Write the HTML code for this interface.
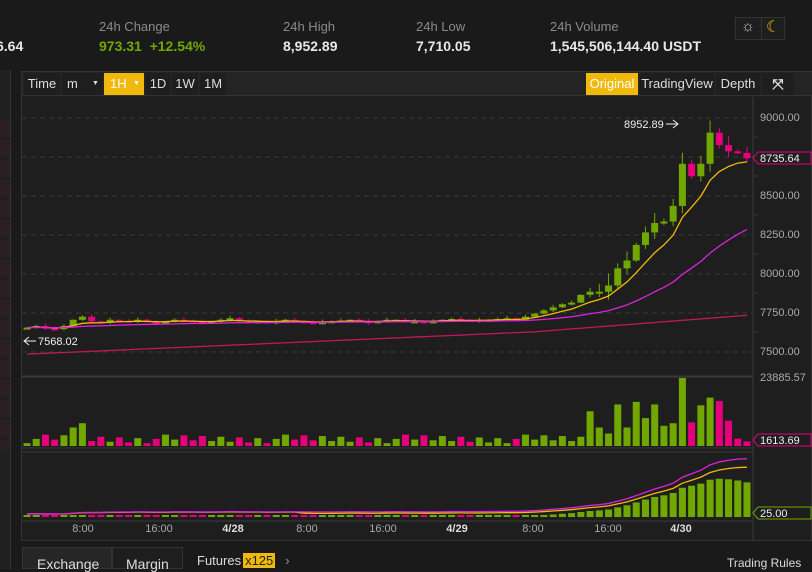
<!DOCTYPE html>
<html><head><meta charset="utf-8">
<style>
*{margin:0;padding:0;box-sizing:border-box}
body{width:812px;height:569px;background:#1a1a1a;font-family:"Liberation Sans",sans-serif;overflow:hidden;position:relative;color:#ddd}
.lbl{position:absolute;top:19px;font-size:13px;color:#8a8a8a}
.val{position:absolute;top:38px;font-size:14px;font-weight:bold;color:#e8e8e8}
.tb{position:absolute;top:73px;height:22px;font-size:13px;line-height:22px;color:#ddd;background:#1e1e1e;text-align:center;white-space:nowrap}
.y{font-size:11px;fill:#aaa}
</style></head><body>
<div class="val" style="left:-4px">6.64</div>
<div class="lbl" style="left:99px">24h Change</div>
<div class="val" style="left:99px;color:#70a800">973.31&nbsp; +12.54%</div>
<div class="lbl" style="left:283px">24h High</div>
<div class="val" style="left:283px">8,952.89</div>
<div class="lbl" style="left:416px">24h Low</div>
<div class="val" style="left:416px">7,710.05</div>
<div class="lbl" style="left:550px">24h Volume</div>
<div class="val" style="left:550px">1,545,506,144.40 USDT</div>
<div style="position:absolute;left:735px;top:17px;width:50px;height:23px;border:1px solid #333;background:#1e1e1e"></div>
<div style="position:absolute;left:741px;top:18px;font-size:15px;color:#ccc">☼</div>
<div style="position:absolute;left:761px;top:17px;width:1px;height:23px;background:#333"></div>
<div style="position:absolute;left:766px;top:17px;font-size:16px;color:#f0b90b">☾</div>

<div style="position:absolute;left:0;top:70px;width:11px;height:499px;background:#202020;border-right:1px solid #333"></div>
<div style="position:absolute;left:0;top:120px;width:10px;height:330px;background:repeating-linear-gradient(#2b1e24 0 17px,#1e1e1e 17px 20px)"></div>

<div style="position:absolute;left:21px;top:71px;width:791px;height:470px;background:#1e1e1e;border:1px solid #333"></div>
<div style="position:absolute;left:22px;top:72px;width:790px;height:24px;background:#242424;border-bottom:1px solid #333"></div>
<div class="tb" style="left:24px;width:36px">Time</div>
<div class="tb" style="left:62px;width:40px;text-align:left;padding-left:5px">m<span style="font-size:7px;position:absolute;left:30px">▼</span></div>
<div class="tb" style="left:104px;width:40px;background:#f0b90b;color:#fff;text-align:left;padding-left:6px">1H<span style="font-size:7px;position:absolute;left:29px">▼</span></div>
<div class="tb" style="left:146px;width:24px">1D</div>
<div class="tb" style="left:172px;width:26px">1W</div>
<div class="tb" style="left:200px;width:26px">1M</div>
<div class="tb" style="left:586px;width:52px;background:#f0b90b;color:#fff">Original</div>
<div class="tb" style="left:640px;width:74px">TradingView</div>
<div class="tb" style="left:716px;width:44px">Depth</div>
<div class="tb" style="left:762px;width:32px;font-size:14px;font-weight:bold">⤧</div>

<svg style="position:absolute;left:0;top:0" width="812" height="569">
<g stroke="#3a3a3a" stroke-dasharray="5,4">
<line x1="22" x2="753" y1="118" y2="118"/><line x1="22" x2="753" y1="157" y2="157"/><line x1="22" x2="753" y1="196" y2="196"/><line x1="22" x2="753" y1="235" y2="235"/><line x1="22" x2="753" y1="274" y2="274"/><line x1="22" x2="753" y1="313" y2="313"/><line x1="22" x2="753" y1="352" y2="352"/>
</g>
<g stroke="#3a3a3a"><line x1="753" x2="753" y1="97" y2="540"/><line x1="22" x2="753" y1="376" y2="376"/><line x1="22" x2="753" y1="377" y2="377"/><line x1="22" x2="753" y1="448" y2="448"/><line x1="22" x2="753" y1="452" y2="452"/><line x1="22" x2="753" y1="521" y2="521"/>
<line x1="753" x2="758" y1="137" y2="137"/><line x1="753" x2="758" y1="176" y2="176"/><line x1="753" x2="758" y1="215" y2="215"/><line x1="753" x2="758" y1="254" y2="254"/><line x1="753" x2="758" y1="293" y2="293"/><line x1="753" x2="758" y1="332" y2="332"/></g>
<g><text x="760" y="121" class="y">9000.00</text><text x="760" y="199" class="y">8500.00</text><text x="760" y="238" class="y">8250.00</text><text x="760" y="277" class="y">8000.00</text><text x="760" y="316" class="y">7750.00</text><text x="760" y="355" class="y">7500.00</text><text x="760" y="381" class="y">23885.57</text></g>
<g id="cd"></g>
<path d="M753 158 l5 -6 h53 v12 h-53z" fill="#1e1e1e" stroke="#e6007a"/><text x="760" y="162" font-size="11" fill="#eee">8735.64</text>
<path d="M753 440 l5 -6 h53 v12 h-53z" fill="#1e1e1e" stroke="#e6007a"/><text x="760" y="444" font-size="11" fill="#eee">1613.69</text>
<path d="M753 513 l5 -6 h53 v12 h-53z" fill="#1e1e1e" stroke="#70a800"/><text x="760" y="517" font-size="11" fill="#eee">25.00</text>
<text x="624" y="128" font-size="11" fill="#eee">8952.89</text><path d="M666 124 h12 m-5 -4 l5 4 l-5 4" stroke="#eee" fill="none"/>
<path d="M36 341 h-12 m5 -4 l-5 4 l5 4" stroke="#eee" fill="none"/><text x="38" y="345" font-size="11" fill="#eee">7568.02</text>
<g font-size="11" fill="#aaa" text-anchor="middle"><text x="83" y="532">8:00</text><text x="159" y="532">16:00</text><text x="233" y="532" fill="#ddd" font-weight="bold">4/28</text><text x="307" y="532">8:00</text><text x="383" y="532">16:00</text><text x="457" y="532" fill="#ddd" font-weight="bold">4/29</text><text x="533" y="532">8:00</text><text x="608" y="532">16:00</text><text x="681" y="532" fill="#ddd" font-weight="bold">4/30</text></g>
</svg>

<div style="position:absolute;left:22px;top:547px;width:90px;height:22px;background:#262626;border:1px solid #333;font-size:14px;padding:8px 0 0 14px">Exchange</div>
<div style="position:absolute;left:112px;top:547px;width:71px;height:22px;background:#1e1e1e;border:1px solid #333;font-size:14px;padding:8px 0 0 13px">Margin</div>
<div style="position:absolute;left:197px;top:553px;font-size:13px">Futures<span style="background:#f0b90b;color:#222;padding:0 2px;margin-left:2px">x125</span><span style="margin-left:10px;color:#999">›</span></div>
<div style="position:absolute;left:727px;top:556px;font-size:12px">Trading Rules</div>

<script>
var cl=[7650,7660,7645,7640,7660,7700,7720,7690,7680,7700,7695,7690,7700,7685,7680,7690,7700,7695,7690,7680,7690,7700,7710,7690,7685,7690,7680,7690,7700,7690,7685,7680,7685,7690,7695,7700,7690,7680,7690,7700,7700,7690,7690,7685,7690,7700,7705,7700,7690,7700,7700,7705,7710,7700,7720,7740,7760,7780,7800,7810,7860,7880,7880,7920,8030,8080,8180,8260,8320,8330,8430,8700,8620,8700,8900,8820,8780,8770,8735];
var n=cl.length,x0=27,st=(747-27)/(n-1),Y=p=>117+(9000-p)*0.156,h='';
function ema(k){var o=[],e=cl[0],a=2/(k+1);cl.forEach(c=>{e=e+a*(c-e);o.push(e)});return o}
var m1=ema(7),m2=ema(30),m3=ema(99);
for(var i=0;i<n;i++){var o=i?cl[i-1]:7640,c=cl[i],up=c>=o,col=up?'#70a800':'#e6007a',x=x0+i*st,t=Y(Math.max(o,c)),b=Y(Math.min(o,c)),hh=Math.max(b-t,2);
var w=i>60?4+((i*37)%11)*2:1+((i*37)%5);
h+=`<line x1="${x}" x2="${x}" y1="${t-w/2}" y2="${b+w/3}" stroke="${col}"/><rect x="${x-3.5}" y="${t}" width="7" height="${hh}" fill="${col}"/>`;
var v=i>60?(Math.abs(c-o)*60+2000+((i*53)%7)*1500):(1000+((i*71)%13)*250+(i==5||i==6?4500:0));v=Math.min(v,23885);if(i==n-1)v=1613;
var vh=v/23885*68;h+=`<rect x="${x-3.5}" y="${446-vh}" width="7" height="${vh}" fill="${col}"/>`;
var mh=Math.max(0,(m1[i]-m2[i])*0.08);if(i>56)h+=`<rect x="${x-3.5}" y="${517-mh}" width="7" height="${mh}" fill="#70a800"/>`;else h+=`<rect x="${x-3.5}" y="515" width="7" height="2" fill="${col}"/>`;}
function pl(a,f,col){return `<polyline fill="none" stroke="${col}" stroke-width="1.3" points="${a.map((v,i)=>(x0+i*st)+','+f(v,i)).join(' ')}"/>`}
h+=pl(m1,v=>Y(v),'#f0b90b')+pl(m2,v=>Y(v),'#e020e0')+pl(m3.map((v,i)=>7480+i*2.6+Math.max(0,i-55)*2),v=>Y(v),'#c2185b');
h+=pl(m1,(v,i)=>517-Math.max(0,(v-7650))*0.045-(i<30?3:2),'#f0b90b')+pl(m1,(v,i)=>515-Math.max(0,(v-7630))*0.052,'#e020e0');
document.getElementById('cd').innerHTML=h;
</script>
</body></html>
